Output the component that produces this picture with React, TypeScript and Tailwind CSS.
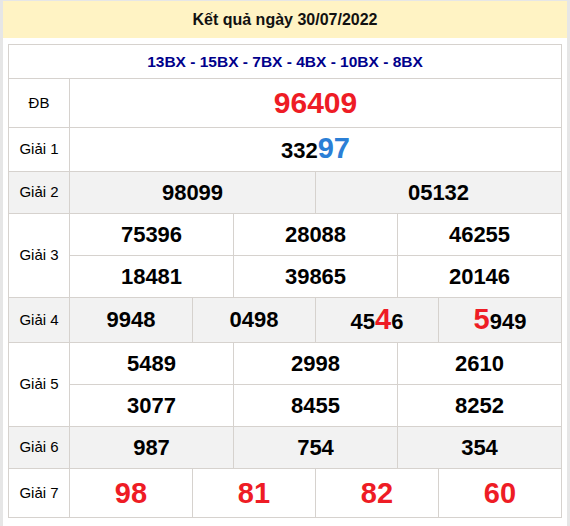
const Red = ({ children }: { children: React.ReactNode }) => (
  <span className="text-[#ee1c25] text-[29px] leading-none">{children}</span>
)

const cell = "border border-[#d6d2ce] text-center align-middle"
const label = `${cell} text-[15px] font-normal`

const App = () => {
  const g3 = [["75396", "28088", "46255"], ["18481", "39865", "20146"]]
  const g5 = [["5489", "2998", "2610"], ["3077", "8455", "8252"]]

  return (
    <div className="w-[570px] h-[526px] bg-white border-x-[3px] border-t border-[#e6e6e6] font-['Liberation_Sans',Arial,sans-serif] text-black">
      <div className="h-[37px] bg-[#fff3c4] flex items-center justify-center text-[16px] font-bold text-[#111]">
        Kết quả ngày 30/07/2022
      </div>
      <div className="px-[5px] pt-[6px]">
        <table className="w-full table-fixed border-collapse">
          <colgroup>
            <col className="w-[61px]" />
            {Array.from({ length: 12 }).map((_, i) => (
              <col key={i} />
            ))}
          </colgroup>
          <tbody className="font-bold text-[22px] leading-tight">
            <tr className="h-[34px]">
              <td colSpan={13} className={`${cell} text-[15.5px] text-[#00008b]`}>
                13BX - 15BX - 7BX - 4BX - 10BX - 8BX
              </td>
            </tr>
            <tr className="h-[49px]">
              <td className={label}>ĐB</td>
              <td colSpan={12} className={`${cell} text-[#ee1c25] text-[30px]`}>96409</td>
            </tr>
            <tr className="h-[44px]">
              <td className={label}>Giải 1</td>
              <td colSpan={12} className={cell}>
                332<span className="text-[#2b7fd6] text-[29px] leading-none">97</span>
              </td>
            </tr>
            <tr className="h-[42px] bg-[#f2f2f2]">
              <td className={label}>Giải 2</td>
              <td colSpan={6} className={cell}>98099</td>
              <td colSpan={6} className={cell}>05132</td>
            </tr>
            {g3.map((line, i) => (
              <tr key={i} className="h-[42px]">
                {i === 0 && (
                  <td rowSpan={2} className={label}>Giải 3</td>
                )}
                {line.map((n) => (
                  <td key={n} colSpan={4} className={cell}>{n}</td>
                ))}
              </tr>
            ))}
            <tr className="h-[45px] bg-[#f2f2f2]">
              <td className={label}>Giải 4</td>
              <td colSpan={3} className={cell}>9948</td>
              <td colSpan={3} className={cell}>0498</td>
              <td colSpan={3} className={cell}>45<Red>4</Red>6</td>
              <td colSpan={3} className={cell}><Red>5</Red>949</td>
            </tr>
            {g5.map((line, i) => (
              <tr key={i} className="h-[42px]">
                {i === 0 && (
                  <td rowSpan={2} className={label}>Giải 5</td>
                )}
                {line.map((n) => (
                  <td key={n} colSpan={4} className={cell}>{n}</td>
                ))}
              </tr>
            ))}
            <tr className="h-[42px] bg-[#f2f2f2]">
              <td className={label}>Giải 6</td>
              <td colSpan={4} className={cell}>987</td>
              <td colSpan={4} className={cell}>754</td>
              <td colSpan={4} className={cell}>354</td>
            </tr>
            <tr className="h-[49px]">
              <td className={label}>Giải 7</td>
              {["98", "81", "82", "60"].map((n) => (
                <td key={n} colSpan={3} className={`${cell} text-[#ee1c25] text-[29px]`}>{n}</td>
              ))}
            </tr>
          </tbody>
        </table>
      </div>
    </div>
  )
}

export default App
